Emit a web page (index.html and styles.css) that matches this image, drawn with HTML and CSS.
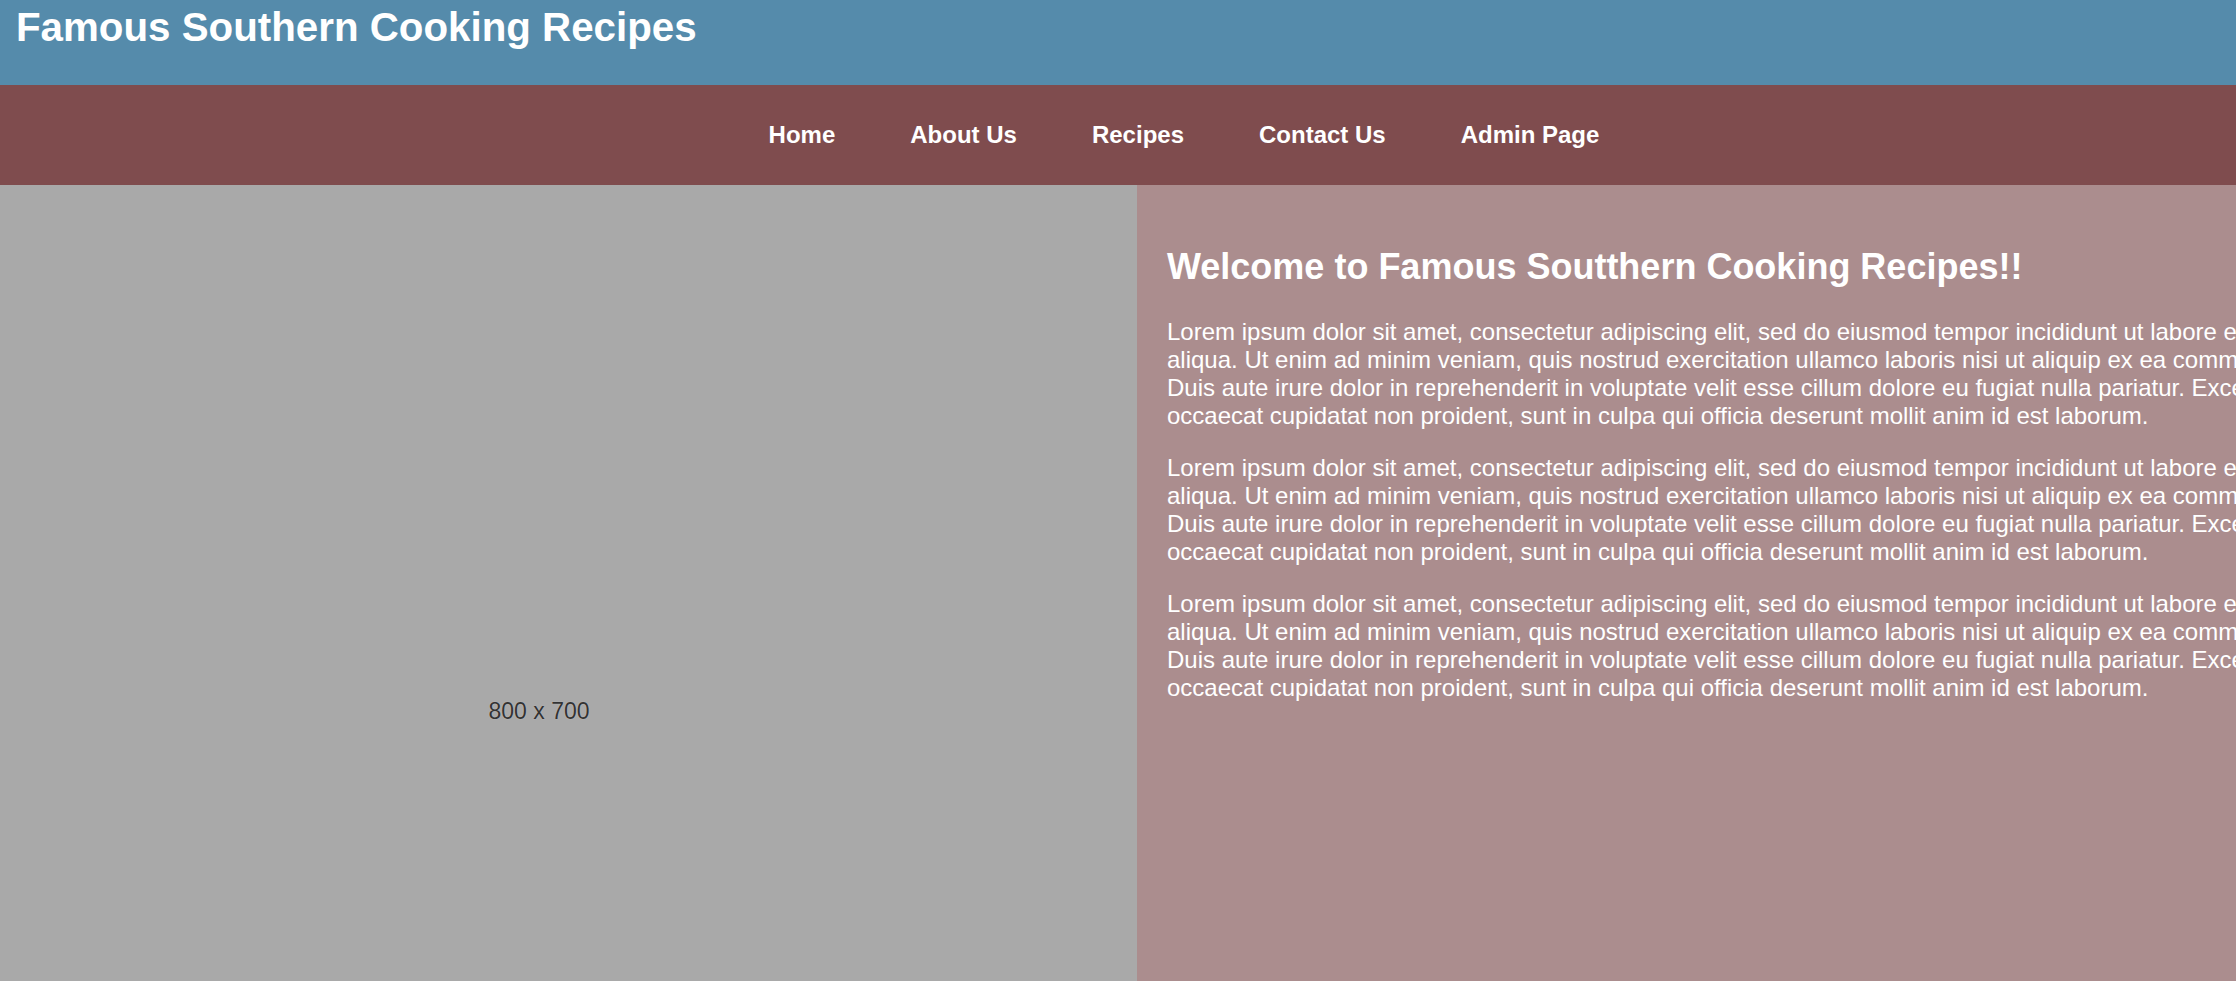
FILE: index.html
```html
<!DOCTYPE html>
<html lang="en">
<head>
<meta charset="utf-8">
<title>Famous Southern Cooking Recipes</title>
<link rel="stylesheet" href="styles.css">
</head>
<body>
<header class="site-header">
  <h1 class="site-title">Famous Southern Cooking Recipes</h1>
</header>
<nav class="main-nav">
  <a class="nav-link" href="#">Home</a>
  <a class="nav-link" href="#">About Us</a>
  <a class="nav-link" href="#">Recipes</a>
  <a class="nav-link" href="#">Contact Us</a>
  <a class="nav-link" href="#">Admin Page</a>
</nav>
<main class="content">
  <section class="media">
    <div class="placeholder"><span class="placeholder-label">800 x 700</span></div>
  </section>
  <section class="intro">
    <h2 class="intro-title">Welcome to Famous Soutthern Cooking Recipes!!</h2>
    <p class="intro-text">Lorem ipsum dolor sit amet, consectetur adipiscing elit, sed do eiusmod tempor incididunt ut labore et dolore magna aliqua. Ut enim ad minim veniam, quis nostrud exercitation ullamco laboris nisi ut aliquip ex ea commodo consequat. Duis aute irure dolor in reprehenderit in voluptate velit esse cillum dolore eu fugiat nulla pariatur. Excepteur sint occaecat cupidatat non proident, sunt in culpa qui officia deserunt mollit anim id est laborum.</p>
    <p class="intro-text">Lorem ipsum dolor sit amet, consectetur adipiscing elit, sed do eiusmod tempor incididunt ut labore et dolore magna aliqua. Ut enim ad minim veniam, quis nostrud exercitation ullamco laboris nisi ut aliquip ex ea commodo consequat. Duis aute irure dolor in reprehenderit in voluptate velit esse cillum dolore eu fugiat nulla pariatur. Excepteur sint occaecat cupidatat non proident, sunt in culpa qui officia deserunt mollit anim id est laborum.</p>
    <p class="intro-text">Lorem ipsum dolor sit amet, consectetur adipiscing elit, sed do eiusmod tempor incididunt ut labore et dolore magna aliqua. Ut enim ad minim veniam, quis nostrud exercitation ullamco laboris nisi ut aliquip ex ea commodo consequat. Duis aute irure dolor in reprehenderit in voluptate velit esse cillum dolore eu fugiat nulla pariatur. Excepteur sint occaecat cupidatat non proident, sunt in culpa qui officia deserunt mollit anim id est laborum.</p>
  </section>
</main>
</body>
</html>
```
FILE: styles.css
```css
html, body {
  margin: 0;
  padding: 0;
  overflow: hidden;
}
body {
  font-family: "Liberation Sans", Arial, sans-serif;
  font-size: 24px;
  color: #fff;
  background: #a9a9a9;
}
.site-header {
  height: 85px;
  box-sizing: border-box;
  padding: 5px 16px 0;
  background: #558bab;
}
.site-title {
  margin: 0;
  font-size: 40.3px;
  font-weight: bold;
  color: #fff;
}
.main-nav {
  height: 100px;
  box-sizing: border-box;
  display: flex;
  align-items: center;
  justify-content: center;
  gap: 75px;
  padding-left: 132px;
  background: #7f4c4e;
}
.nav-link {
  color: #fff;
  font-weight: bold;
  font-size: 24px;
  text-decoration: none;
}
.content {
  display: flex;
  align-items: stretch;
  min-height: 796px;
}
.media {
  flex: 0 0 1137px;
  background: #a9a9a9;
}
.placeholder {
  width: 1078px;
  height: 1052px;
  display: flex;
  align-items: center;
  justify-content: center;
}
.placeholder-label {
  font-family: "Liberation Sans", Arial, sans-serif;
  font-size: 23px;
  color: #333;
  text-shadow: 0 0 1px rgba(255,255,255,0.45);
}
.intro {
  flex: 0 0 auto;
  width: 1260px;
  padding: 31px 31px 31px 30px;
  background: #ab8d8e;
}
.intro-title {
  font-size: 36px;
  font-weight: bold;
  margin: 30px 0;
}
.intro-text {
  margin: 24px 0;
}
```
